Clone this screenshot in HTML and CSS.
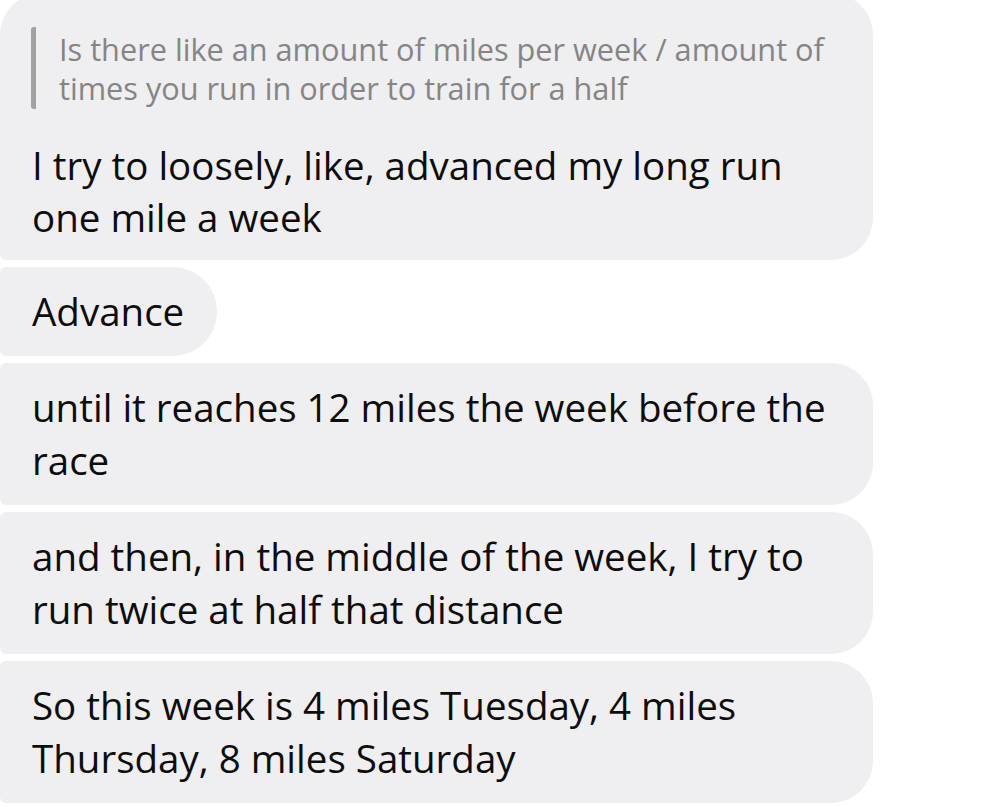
FILE: index.html
```html
<!DOCTYPE html>
<html lang="en">
<head>
<meta charset="utf-8">
<title>Messages</title>
<link rel="stylesheet" href="styles.css">
</head>
<body>
<main class="thread">
  <div class="bubble wide first">
    <blockquote class="quote">Is there like an amount of miles per week / amount of<br>times you run in order to train for a half</blockquote>
    <p class="text tight">I try to loosely, like, advanced my long run<br>one mile a week</p>
  </div>
  <div class="bubble short">
    <p class="text">Advance</p>
  </div>
  <div class="bubble wide">
    <p class="text">until it reaches 12 miles the week before the<br>race</p>
  </div>
  <div class="bubble wide">
    <p class="text">and then, in the middle of the week, I try to<br>run twice at half that distance</p>
  </div>
  <div class="bubble wide">
    <p class="text">So this week is 4 miles Tuesday, 4 miles<br>Thursday, 8 miles Saturday</p>
  </div>
</main>
</body>
</html>
```

FILE: styles.css
```css
html, body {
  margin: 0;
  padding: 0;
  background: #ffffff;
}

body {
  width: 1000px;
  height: 807px;
  overflow: hidden;
  font-family: "Open Sans", "Noto Sans", "DejaVu Sans", sans-serif;
  color: #0d0d0d;
}

.thread {
  display: flex;
  flex-direction: column;
  align-items: flex-start;
  gap: 6.5px;
  margin-top: -7px;
}

.bubble {
  box-sizing: border-box;
  background: #efeef0;
  padding: 18px 32px 18.5px 32px;
  border-radius: 6px 42px 42px 6px;
}

.bubble.wide {
  width: 873px;
}

.bubble.first {
  border-radius: 42px 42px 42px 6px;
  padding-bottom: 17px;
}

.bubble.short {
  border-radius: 6px 45px 45px 6px;
  padding-right: 33px;
}

.text {
  margin: 0;
  font-size: 38.5px;
  line-height: 53px;
  white-space: nowrap;
}

.text.tight {
  line-height: 52px;
}

.quote {
  margin: 16px 0 30px -1px;
  padding: 3px 0 1px 23px;
  border-left: 5px solid #a2a2a2;
  border-radius: 3px;
  font-size: 30.7px;
  line-height: 39px;
  color: #858585;
  white-space: nowrap;
}
```
